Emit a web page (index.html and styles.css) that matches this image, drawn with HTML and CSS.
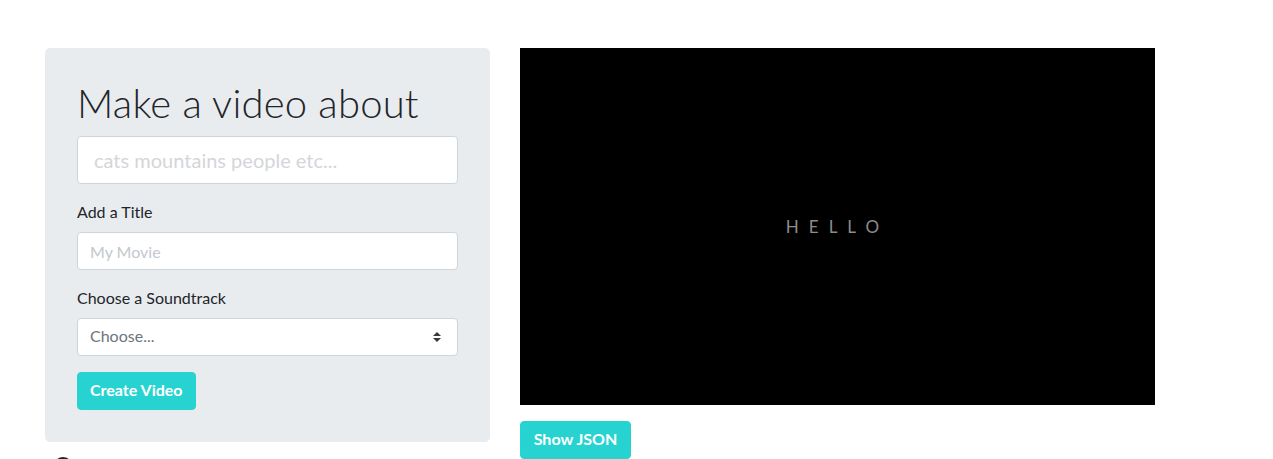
FILE: index.html
```html
<!DOCTYPE html>
<html lang="en">
<head>
<meta charset="utf-8">
<title>Make a video</title>
<link rel="stylesheet" href="styles.css">
</head>
<body>
<div class="page">
  <div class="left">
    <div class="jumbotron">
      <h1 class="title">Make a video about</h1>
      <input class="input input-lg" type="text" placeholder="cats mountains people etc...">
      <div class="group">
        <label class="label">Add a Title</label>
        <input class="input" type="text" placeholder="My Movie">
      </div>
      <div class="group">
        <label class="label">Choose a Soundtrack</label>
        <div class="select">
          <span class="select-text">Choose...</span>
          <svg class="select-arrow" width="8" height="10" viewBox="0 0 8 10"><path d="M4 0L0 4h8zM4 10L0 6h8z" fill="#343a40"/></svg>
        </div>
      </div>
      <button class="btn">Create Video</button>
    </div>
    <div class="spinner"></div>
  </div>
  <div class="right">
    <div class="video"><span class="hello">HELLO</span></div>
    <button class="btn btn-json">Show JSON</button>
  </div>
</div>
</body>
</html>
```
FILE: styles.css
```css
* { box-sizing: border-box; }
html, body { margin: 0; padding: 0; background: #fff; overflow: hidden; }
body {
  font-family: Lato, "Noto Sans", sans-serif;
  color: #212529;
  font-size: 16px;
  line-height: 1.5;
}
.page {
  display: flex;
  gap: 30px;
  padding: 48px 0 0 45px;
  align-items: flex-start;
}
.left { width: 445px; display: flex; flex-direction: column; }
.jumbotron {
  background: #e9ecef;
  border-radius: 5px;
  padding: 32px;
  display: flex;
  flex-direction: column;
  align-items: flex-start;
}
.title {
  margin: 0 0 8px 0;
  font-size: 40px;
  font-weight: 300;
  line-height: 47px;
  letter-spacing: 0.2px;
}
.input {
  display: block;
  width: 381px;
  height: 38px;
  border: 1px solid #ced4da;
  border-radius: 4px;
  background: #fff;
  padding: 6px 12px;
  font-family: inherit;
  font-size: 16px;
  color: #495057;
}
.input::placeholder { color: #c4c8cc; }
.input-lg {
  height: 48px;
  font-size: 20px;
  padding: 8px 16px;
  margin-top: 1px;
}
.input-lg::placeholder { color: #d3d6d9; }
.group { margin-top: 16px; display: flex; flex-direction: column; }
.label { margin-bottom: 8px; line-height: 23px; font-size: 16px; padding-bottom: 1px; }
.select {
  width: 381px;
  height: 38px;
  border: 1px solid #ced4da;
  border-radius: 4px;
  background: #fff;
  padding: 5px 12px 7px;
  display: flex;
  align-items: center;
  justify-content: space-between;
  color: #6c757d;
}
.select-arrow { margin-right: 4px; margin-top: 2px; }
.btn {
  margin-top: 16px;
  background: #27d3d1;
  border: 1px solid #27d3d1;
  border-radius: 4px;
  color: #fff;
  font-family: inherit;
  font-weight: 700;
  font-size: 16px;
  line-height: 22px;
  height: 38px;
  padding: 6px 12px 8px;
}
.spinner {
  margin: 15px 0 0 8px;
  width: 20px;
  height: 20px;
  border-radius: 50%;
  border: 3px solid #212529;
  border-bottom-color: transparent;
}
.right { display: flex; flex-direction: column; align-items: flex-start; }
.video {
  width: 635px;
  height: 357px;
  background: #000;
  display: flex;
  align-items: center;
  justify-content: center;
}
.hello {
  color: #8c8c8c;
  font-size: 17px;
  letter-spacing: 10px;
  margin-top: 0;
}
.btn-json { margin-top: 16px; width: 111px; }
```
